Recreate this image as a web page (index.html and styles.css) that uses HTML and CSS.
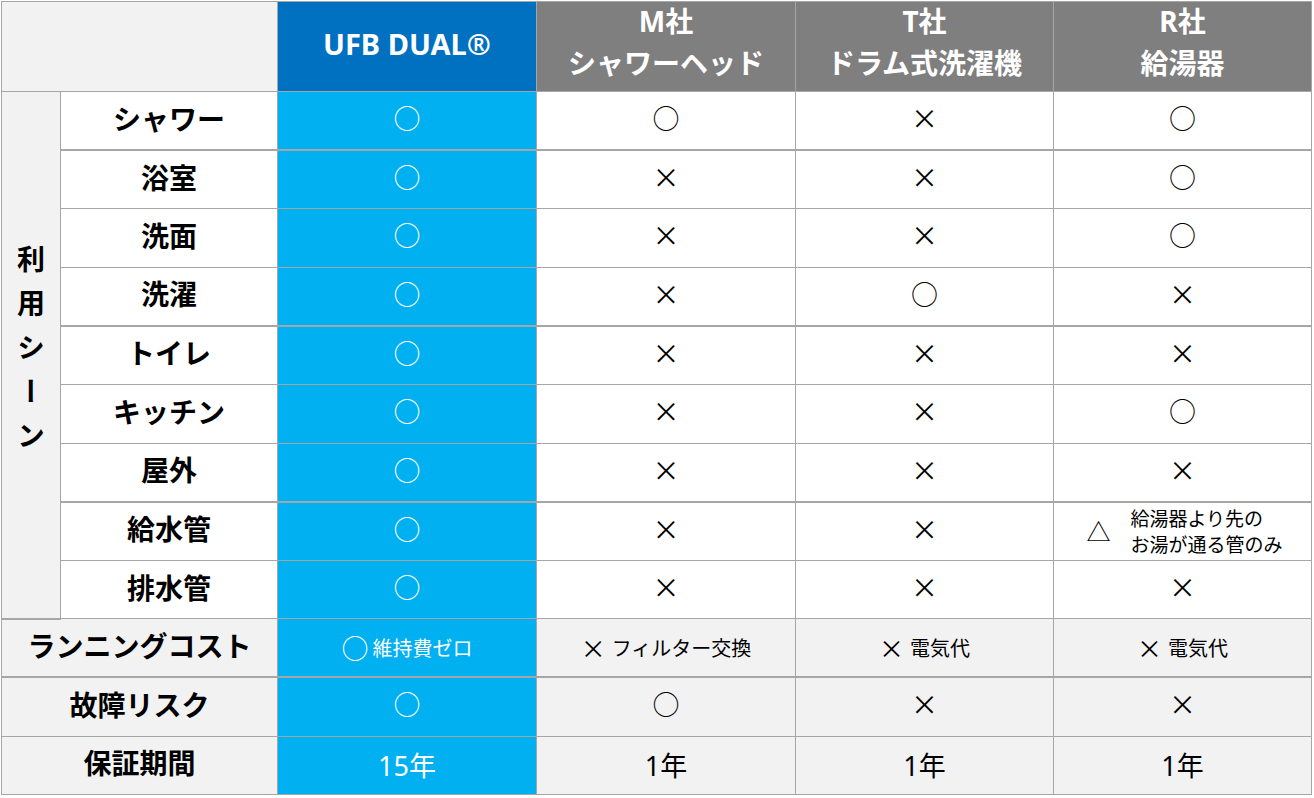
FILE: index.html
```html
<!DOCTYPE html>
<html lang="ja">
<head>
<meta charset="utf-8">
<title>UFB DUAL 比較表</title>
<link rel="stylesheet" href="styles.css">
</head>
<body>
<div class="wrap">
<table class="cmp">
  <colgroup>
    <col class="c-scene">
    <col class="c-label">
    <col class="c-ufb">
    <col class="c-m">
    <col class="c-t">
    <col class="c-r">
  </colgroup>
  <thead>
    <tr class="head">
      <th class="corner" colspan="2"></th>
      <th class="h-ufb">UFB DUAL®</th>
      <th class="h-other"><span class="l1">M社</span><span class="l2">シャワーヘッド</span></th>
      <th class="h-other"><span class="l1">T社</span><span class="l2">ドラム式洗濯機</span></th>
      <th class="h-other"><span class="l1">R社</span><span class="l2">給湯器</span></th>
    </tr>
  </thead>
  <tbody>
    <tr class="thick">
      <th class="scene" rowspan="9"><span class="vert">利用シーン</span></th>
      <th class="label">シャワー</th>
      <td class="ufb"><span class="sym o">○</span></td>
      <td><span class="sym o">○</span></td>
      <td><span class="sym x">×</span></td>
      <td><span class="sym o">○</span></td>
    </tr>
    <tr>
      <th class="label">浴室</th>
      <td class="ufb"><span class="sym o">○</span></td>
      <td><span class="sym x">×</span></td>
      <td><span class="sym x">×</span></td>
      <td><span class="sym o">○</span></td>
    </tr>
    <tr>
      <th class="label">洗面</th>
      <td class="ufb"><span class="sym o">○</span></td>
      <td><span class="sym x">×</span></td>
      <td><span class="sym x">×</span></td>
      <td><span class="sym o">○</span></td>
    </tr>
    <tr class="thick">
      <th class="label">洗濯</th>
      <td class="ufb"><span class="sym o">○</span></td>
      <td><span class="sym x">×</span></td>
      <td><span class="sym o">○</span></td>
      <td><span class="sym x">×</span></td>
    </tr>
    <tr>
      <th class="label">トイレ</th>
      <td class="ufb"><span class="sym o">○</span></td>
      <td><span class="sym x">×</span></td>
      <td><span class="sym x">×</span></td>
      <td><span class="sym x">×</span></td>
    </tr>
    <tr>
      <th class="label">キッチン</th>
      <td class="ufb"><span class="sym o">○</span></td>
      <td><span class="sym x">×</span></td>
      <td><span class="sym x">×</span></td>
      <td><span class="sym o">○</span></td>
    </tr>
    <tr class="thick">
      <th class="label">屋外</th>
      <td class="ufb"><span class="sym o">○</span></td>
      <td><span class="sym x">×</span></td>
      <td><span class="sym x">×</span></td>
      <td><span class="sym x">×</span></td>
    </tr>
    <tr>
      <th class="label">給水管</th>
      <td class="ufb"><span class="sym o">○</span></td>
      <td><span class="sym x">×</span></td>
      <td><span class="sym x">×</span></td>
      <td class="tri-cell">
        <div class="partial">
          <span class="sym tri">△</span>
          <span class="note">給湯器より先の<br>お湯が通る管のみ</span>
        </div>
      </td>
    </tr>
    <tr>
      <th class="label">排水管</th>
      <td class="ufb"><span class="sym o">○</span></td>
      <td><span class="sym x">×</span></td>
      <td><span class="sym x">×</span></td>
      <td><span class="sym x">×</span></td>
    </tr>
    <tr class="thick grey cost">
      <th class="label wide" colspan="2">ランニングコスト</th>
      <td class="ufb"><span class="sym o">○</span><span class="small">維持費ゼロ</span></td>
      <td><span class="sym xs">×</span><span class="small">フィルター交換</span></td>
      <td><span class="sym xs">×</span><span class="small">電気代</span></td>
      <td><span class="sym xs">×</span><span class="small">電気代</span></td>
    </tr>
    <tr class="grey">
      <th class="label wide" colspan="2">故障リスク</th>
      <td class="ufb"><span class="sym o">○</span></td>
      <td><span class="sym o">○</span></td>
      <td><span class="sym x">×</span></td>
      <td><span class="sym x">×</span></td>
    </tr>
    <tr class="grey years">
      <th class="label wide" colspan="2">保証期間</th>
      <td class="ufb"><span class="year">15年</span></td>
      <td><span class="year">1年</span></td>
      <td><span class="year">1年</span></td>
      <td><span class="year">1年</span></td>
    </tr>
  </tbody>
</table>
</div>
</body>
</html>
```

FILE: styles.css
```css
html, body {
  margin: 0;
  padding: 0;
  background: #ffffff;
}

body {
  font-family: "Noto Sans", "Noto Sans CJK JP", sans-serif;
  color: #000000;
}

.wrap {
  padding: 1px 0 0 1px;
}

.cmp {
  border-collapse: collapse;
  table-layout: fixed;
  width: 1311px;
}

.c-scene { width: 59px; }
.c-label { width: 217px; }
.c-ufb { width: 259px; }
.c-m { width: 259px; }
.c-t { width: 258px; }
.c-r { width: 258px; }

.cmp th,
.cmp td {
  border: 1px solid #a6a6a6;
  padding: 0;
  text-align: center;
  vertical-align: middle;
  background: #ffffff;
}

.cmp tbody td,
.cmp tbody th.label {
  padding-bottom: 6px;
  line-height: 1;
}

.cmp tbody td.tri-cell {
  padding-bottom: 1px;
}

.cmp tbody tr.cost > td {
  padding-bottom: 0;
}

.cmp tbody tr.years > td {
  padding-bottom: 0;
}

.cmp tbody tr {
  height: 58.6px;
}

.cmp tr.thick > th,
.cmp tr.thick > td {
  border-bottom: 2px solid #a6a6a6;
}

.head {
  height: 89px;
}

.head th {
  color: #ffffff;
  font-weight: 700;
  font-size: 28px;
  line-height: 44px;
  padding-bottom: 5px;
}

.l1 {
  display: block;
  line-height: 38px;
}

.l2 {
  display: block;
  line-height: 46px;
}

.corner {
  background: #f2f2f2 !important;
}

.h-ufb {
  background: #0070c0 !important;
  font-size: 29px !important;
}

.h-other {
  background: #7f7f7f !important;
}

.scene {
  background: #f2f2f2 !important;
  font-size: 28px;
  font-weight: 700;
  font-family: "Noto Sans CJK JP", sans-serif;
}

.vert {
  display: inline-block;
  writing-mode: vertical-rl;
  letter-spacing: 16px;
  line-height: 28px;
  padding-top: 8px;
}

.label {
  font-family: "Noto Sans CJK JP", sans-serif;
  font-weight: 700;
  font-size: 28px;
}

.cmp td.ufb {
  background: #00b0f0;
  color: #ffffff;
}

.cmp tr.grey > th,
.cmp tr.grey > td {
  background: #f2f2f2;
}

.cmp tr.grey > td.ufb {
  background: #00b0f0;
}

.sym {
  font-family: "Noto Sans CJK JP", sans-serif;
  display: inline-block;
  line-height: 1;
  vertical-align: middle;
}

.sym.o {
  font-size: 27px;
}

.sym.x {
  font-size: 27px;
}

.sym.xs {
  font-size: 25px;
  margin-right: 6px;
}

.cmp td.ufb .sym.o + .small {
  margin-left: 4px;
}

.small {
  font-family: "Noto Sans CJK JP", sans-serif;
  font-size: 20px;
  vertical-align: middle;
}

.partial {
  display: flex;
  align-items: center;
  justify-content: center;
  gap: 20px;
  padding-left: 4px;
}

.sym.tri {
  font-size: 24px;
}

.note {
  font-family: "Noto Sans CJK JP", sans-serif;
  font-size: 19px;
  line-height: 26px;
  text-align: left;
}

.year {
  font-family: "Noto Sans", "Noto Sans CJK JP", sans-serif;
  font-size: 27px;
}
```
